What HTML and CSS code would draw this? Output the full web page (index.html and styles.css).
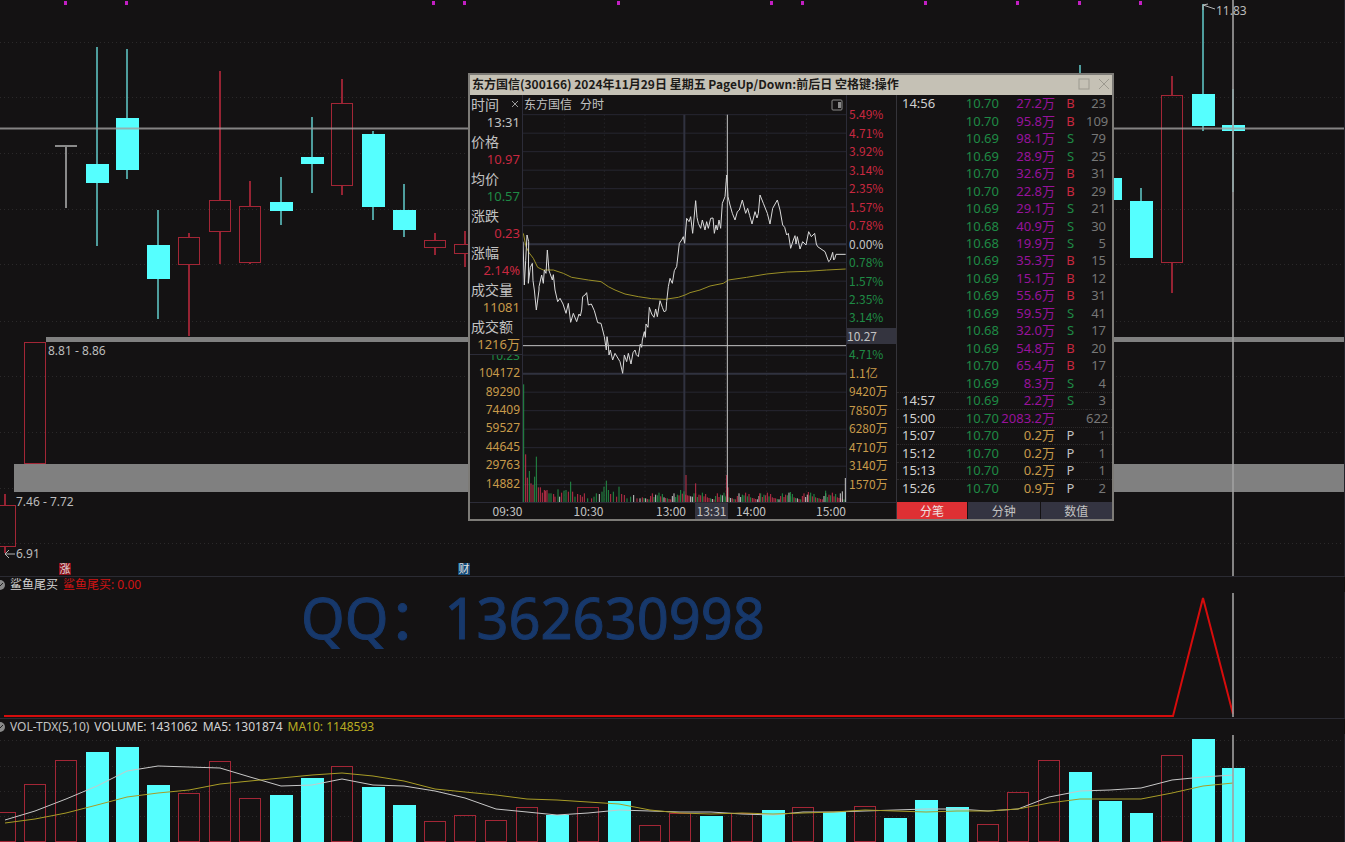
FILE: index.html
```html
<!DOCTYPE html>
<html lang="zh-CN">
<head>
<meta charset="utf-8">
<title>东方国信(300166)</title>
<link rel="stylesheet" href="styles.css">
</head>
<body>
<main class="workspace">
  <section class="pane" aria-label="K线">
    <svg class="chart" viewBox="0 0 1345 576">
      <g class="grid">
        <path d="M0 42.500H1343M0 97.500H1343M0 153.500H1343M0 209.500H1343M0 264.500H1343M0 321.500H1343M0 376.500H1343M0 432.500H1343M0 488.500H1343M0 543.500H1343"/>
      </g>
      <path class="edge" d="M1344.500 0V576"/>
      <g class="gap-band">
        <rect x="46" y="337" width="1298" height="5"/>
        <rect x="14" y="464" width="1330" height="28"/>
      </g>
      <g id="markers" class="marker"></g>
      <g id="candles"></g>
      <path class="cross" d="M0 128.500H1344M1233 0V576"/>
      <path class="pointer" d="M1203 5l12 4M1203 10V5l5-1M5 554H15M9 550l-4 4 4 4"/>
      <g class="note">
        <text x="1216" y="15">11.83</text>
        <text x="48" y="355">8.81 - 8.86</text>
        <text x="16" y="506">7.46 - 7.72</text>
        <text x="16" y="558">6.91</text>
      </g>
      <rect class="badge-rise" x="59" y="563" width="12" height="12"/>
      <rect class="badge-report" x="458" y="563" width="12" height="12"/>
      <text class="badge-text" x="65" y="573">涨</text>
      <text class="badge-text" x="464" y="573">财</text>
    </svg>
  </section>

  <section class="pane" aria-label="鲨鱼尾买">
    <header class="pane-head">
      <svg class="toggle" viewBox="0 0 10 10"><circle cx="5" cy="5" r="5"/><path d="M2 5l2 2 4-4"/></svg>
      <span class="c-bright">鲨鱼尾买</span><span class="c-signal">鲨鱼尾买: 0.00</span>
    </header>
    <svg class="chart" viewBox="0 0 1345 126">
      <path class="grid" d="M0 65.500H1343"/>
      <path class="edge" d="M1344.500 0V126"/>
      <path class="signal" d="M4 124H1173L1203 6L1233 122"/>
      <path class="cross" d="M1233 1V125"/>
      <text class="watermark" x="301" y="47">QQ：1362630998</text>
    </svg>
  </section>

  <section class="pane" aria-label="成交量">
    <header class="pane-head">
      <svg class="toggle" viewBox="0 0 10 10"><circle cx="5" cy="5" r="5"/><path d="M2 5l2 2 4-4"/></svg>
      <span>VOL-TDX(5,10)</span><span class="c-bright">VOLUME: 1431062</span><span class="c-bright">MA5: 1301874</span><span class="c-ma">MA10: 1148593</span>
    </header>
    <svg class="chart" viewBox="0 -1 1345 108">
      <path class="grid" d="M0 5.500H1343M0 31.500H1343M0 56.500H1343M0 81.500H1343"/>
      <path class="edge" d="M1344.500 -1V107"/>
      <g id="volumes"></g>
      <polyline id="ma5" class="ma5"/>
      <polyline id="ma10" class="ma10"/>
      <path class="cross" d="M1233 0V107"/>
    </svg>
  </section>

  <section class="window" aria-label="分时">
    <header class="title-bar">
      <h1>东方国信(300166) 2024年11月29日 星期五 PageUp/Down:前后日 空格键:操作</h1>
      <button class="win-btn" aria-label="最大化"><svg viewBox="0 0 12 12"><rect x="1" y="1" width="10" height="10"/></svg></button>
      <button class="win-btn" aria-label="关闭"><svg viewBox="0 0 12 12"><path d="M1 1l10 10M11 1L1 11"/></svg></button>
    </header>
    <div class="window-body">
      <div class="intraday">
        <div class="left-col">
          <dl class="info">
            <dt>时间<button class="info-close" aria-label="关闭信息"><svg viewBox="0 0 6 6"><path d="M0 0l6 6M6 0L0 6"/></svg></button></dt><dd>13:31</dd>
            <dt>价格</dt><dd class="up">10.97</dd>
            <dt>均价</dt><dd class="down">10.57</dd>
            <dt>涨跌</dt><dd class="up">0.23</dd>
            <dt>涨幅</dt><dd class="up">2.14%</dd>
            <dt>成交量</dt><dd class="amount">11081</dd>
            <dt>成交额</dt><dd class="amount">1216万</dd>
          </dl>
          <div class="clipped down"><span>10.23</span></div>
          <div class="axis axis-left amount">
            <span>104172</span><span>89290</span><span>74409</span><span>59527</span><span>44645</span><span>29763</span><span>14882</span>
          </div>
        </div>
        <div class="plot-col">
          <div class="plot-head"><span>东方国信</span><span>分时</span>
            <button class="side-btn" aria-label="侧栏"><svg viewBox="0 0 12 12"><rect x="1" y="1" width="10" height="10" rx="1"/><path class="fill" d="M7 3h3v6H7z"/></svg></button>
          </div>
          <svg class="plot" viewBox="0 0 969 1164" preserveAspectRatio="none">
            <g id="plot-grid" class="plot-grid"></g>
            <path class="plot-dots" d="M124 2V1164M244 2V1164M366 2V1164M607 2V1164M731 2V1164M850 2V1164"/>
            <path class="plot-axis" d="M484 2V1164M0 391H969M0 779H969"/>
            <g id="ticks-volume"></g>
            <polyline class="avg" points="1,358 9,398 18,416 31,433 44,460 61,468 91,468 121,478 146,490 196,498 234,503 256,518 276,528 306,540 346,548 386,554 426,556 466,550 486,543 501,536 531,528 561,516 601,508 616,498 671,490 731,480 791,474 851,472 911,468 968,465"/>
            <polyline class="price" points="0,383 4,513 8,440 12,363 17,383 16,508 22,460 28,448 30,500 34,528 40,588 48,528 48,518 56,483 61,508 64,468 69,478 73,408 78,470 81,478 88,498 91,482 96,528 104,563 111,553 120,570 129,598 136,568 143,625 151,598 161,623 168,600 172,606 176,588 179,548 186,543 191,536 196,573 205,570 214,590 224,626 234,628 244,668 250,708 252,668 256,695 258,723 262,708 269,738 276,718 291,743 299,778 304,723 311,743 316,718 324,750 330,716 336,708 340,722 346,728 352,690 356,700 358,678 364,653 367,670 369,630 375,640 379,580 386,600 393,610 398,585 403,608 411,560 418,580 423,593 429,590 431,563 436,518 441,493 448,508 454,470 461,458 469,388 476,378 481,368 485,388 491,313 498,323 503,308 509,358 518,260 522,310 526,328 533,343 538,318 546,348 551,323 556,343 563,313 570,312 574,358 579,333 583,348 588,318 593,343 598,268 606,248 611,183 613,208 615,248 621,273 628,298 636,318 643,293 649,288 658,258 668,298 674,283 680,305 687,330 696,293 702,312 706,298 711,243 721,268 733,298 741,330 749,283 763,258 771,288 779,333 785,340 791,363 796,358 803,403 811,378 816,365 819,390 823,368 831,405 839,383 849,393 857,353 865,368 875,358 880,390 884,398 906,413 917,443 922,438 929,415 932,438 935,435 939,421 968,421"/>
            <path class="plot-cross" d="M613 2V1164M0 695H969"/>
          </svg>
        </div>
        <div class="right-col">
          <div class="axis axis-right">
            <span class="up">5.49%</span><span class="up">4.71%</span><span class="up">3.92%</span><span class="up">3.14%</span><span class="up">2.35%</span><span class="up">1.57%</span><span class="up">0.78%</span><span>0.00%</span><span class="down">0.78%</span><span class="down">1.57%</span><span class="down">2.35%</span><span class="down">3.14%</span><span class="current">10.27</span><span class="down">4.71%</span><span class="amount">1.1亿</span><span class="amount">9420万</span><span class="amount">7850万</span><span class="amount">6280万</span><span class="amount">4710万</span><span class="amount">3140万</span><span class="amount">1570万</span>
          </div>
        </div>
        <div class="time-axis">
          <span>09:30</span><span>10:30</span><span class="end">13:00</span><span class="current">13:31</span><span>14:00</span><span class="end last">15:00</span>
        </div>
      </div>
      <div class="trades">
        <table>
          <colgroup><col class="w-time"><col class="w-price"><col class="w-vol"><col class="w-side"><col></colgroup>
          <tbody id="trades"></tbody>
        </table>
        <nav class="tabs"><button class="active">分笔</button><button>分钟</button><button>数值</button></nav>
      </div>
    </div>
  </section>
</main>
<script src="app.js"></script>
</body>
</html>
```
FILE: styles.css
```css
* { box-sizing: border-box; }
body {
  margin: 0;
  background: #141213;
  color: #c2c2c2;
  font: 12px/16px "Noto Sans CJK SC", "Noto Sans", sans-serif;
}
button { border: 0; padding: 0; background: none; color: inherit; font: inherit; }
svg { display: block; fill: none; }
.workspace { position: relative; overflow: hidden; }
.pane { border-bottom: 1px solid #2b2b33; }
.pane:nth-of-type(3) { border-bottom: 0; }
.chart { width: 100%; }
.edge { stroke: #24242c; }
.pane-head, .note, .axis-left, .clipped, .info dd, .trades table {
  font-family: "Noto Sans", "Noto Sans CJK SC", sans-serif;
}
.pane-head { display: flex; gap: 5px; height: 15px; line-height: 15px; }
.toggle { width: 10px; height: 10px; margin: 3px 0 0 -5px; }
.toggle circle { fill: #8a8a8a; }
.toggle path { stroke: #222; }
.c-signal { color: #d01414; }
.c-bright { color: #d4d4d4; }
.c-ma { color: #b9ac22; }

.grid { stroke: #2b292a; stroke-dasharray: 1 3; }
.gap-band { fill: #808080; }
.marker { fill: #c31fc3; }
.cross { stroke: #a0a0a0; stroke-width: 2; opacity: .8; }
.pointer { stroke: #b5b5b5; }
.note { fill: #bcbcbc; }
.badge-rise { fill: #8e1018; }
.badge-report { fill: #134a78; }
.badge-text { fill: #e0e0e0; font-size: 11px; text-anchor: middle; }
.signal { stroke: #d60c0c; stroke-width: 2; }
.watermark {
  fill: #17386b;
  stroke: #17386b;
  stroke-width: 1;
  font: 56px "Noto Sans", "Noto Sans CJK SC", sans-serif;
}
.rise { stroke: #a32636; shape-rendering: crispEdges; }
.fall { fill: #55ffff; }
.fall-wick { stroke: #4e9d9d; stroke-width: 2; shape-rendering: crispEdges; }
.rise-wick { stroke: #962333; stroke-width: 2; shape-rendering: crispEdges; }
.flat { stroke: #8a8a8a; stroke-width: 2; shape-rendering: crispEdges; }
.ma5 { stroke: #c8c8c8; }
.ma10 { stroke: #a89c26; }

.window {
  position: absolute;
  top: 73px;
  left: 468px;
  width: 646px;
  border: 2px solid #7d7b77;
  background: #141213;
}
.title-bar { display: flex; align-items: center; gap: 8px; height: 20px; padding: 0 2px 2px; background: #c5c1b5; color: #1c1a18; }
.title-bar h1 { flex: 1; margin: 0; font-size: 12px; line-height: 18px; white-space: nowrap; }
.win-btn svg { width: 12px; height: 12px; stroke: #9c998f; }
.window-body { display: flex; height: 424px; }
.intraday { flex: 1; display: grid; grid-template-columns: 53px 1fr 50px; grid-template-rows: 1fr 17px; border-right: 1px solid #35343a; }
.left-col { border-right: 1px solid #2c2c38; }
.info { margin: 0; height: 260px; display: grid; grid-auto-rows: 1fr; font-size: 13px; line-height: 17px; border-bottom: 1px solid #2c2c38; }
.info dt { display: flex; align-items: center; justify-content: space-between; font-size: 14px; padding: 0 4px 0 1px; }
.info dd { margin: 0; padding-right: 2px; text-align: right; white-space: nowrap; }
.info-close svg { width: 6px; height: 6px; stroke: #999; }
.up { color: #c82840; }
.down { color: #1f8a45; }
.amount { color: #c79a4a; }
.clipped { display: flex; align-items: flex-end; justify-content: flex-end; height: 9px; overflow: hidden; padding-right: 2px; }
.axis { display: grid; grid-auto-rows: 1fr; align-items: center; }
.axis-left { height: 129px; text-align: right; padding-right: 2px; }
.plot-col { display: flex; flex-direction: column; }
.plot-head { display: flex; gap: 8px; height: 19px; padding: 0 3px 0 1px; line-height: 18px; }
.side-btn { margin-left: auto; }
.side-btn svg { width: 12px; height: 12px; stroke: #8a8a8a; }
.side-btn .fill { fill: #8a8a8a; stroke: none; }
.plot { width: 100%; height: 388px; }
.plot * { vector-effect: non-scaling-stroke; }
.plot-grid { stroke: #272731; }
.plot-dots { stroke: #2c2c33; stroke-dasharray: 1 3; }
.plot-axis { stroke: #30323f; stroke-width: 2; }
.avg { stroke: #9a8f26; }
.price { stroke: #dadada; }
.plot-cross { stroke: #c4c4c4; }
.right-col { border-left: 1px solid #2c2c38; padding-top: 10px; }
.axis-right { height: 388px; }
.axis-right span { padding-left: 2px; }
.current { background: #34343f; }
.axis-right .current { padding-left: 0; }
.time-axis { grid-column: 1 / -1; display: grid; grid-template-columns: 75px 87px 63px 33px 46px 72px; border-top: 1px solid #2c2c38; line-height: 15px; text-align: center; }
.end { text-align: right; padding-right: 9px; }
.last { padding-right: 0; }

.trades { width: 215px; display: flex; flex-direction: column; justify-content: space-between; }
.trades table { height: 402px; width: 100%; table-layout: fixed; border-spacing: 0; font-size: 13px; line-height: 14px; }
.trades td { padding: 0 0 2px; border-top: 1px dotted transparent; text-align: right; white-space: nowrap; }
.trades td:first-child { text-align: left; padding-left: 5px; color: #d0d0d0; }
.trades td:nth-child(4) { text-align: center; }
.trades td:last-child { padding-right: 6px; color: #777; }
.trades .sep td { border-top-color: #2b292a; }
.w-time { width: 60px; }
.w-price { width: 42px; }
.w-vol { width: 56px; }
.w-side { width: 31px; }
.trades .heavy { color: #98129c; }
.tabs { display: grid; grid-template-columns: 70px 1fr 1fr; gap: 1px; height: 17px; }
.tabs button { background: #343441; line-height: 17px; }
.tabs .active { background: #de3034; color: #f0e0e0; }
```
FILE: app.js
```js
const NS = "http://www.w3.org/2000/svg";
const byId = (id) => document.getElementById(id);
const barX = (i) => Math.round(4.5 + i * 30.72);

function add(parent, tag, cls, attrs) {
  const el = document.createElementNS(NS, tag);
  if (cls) el.setAttribute("class", cls);
  for (const key in attrs) el.setAttribute(key, attrs[key]);
  parent.appendChild(el);
}

function bar(parent, x, top, bottom, kind) {
  if (kind === "r") {
    add(parent, "rect", "rise", { x: x - 10.5, y: top + 0.5, width: 21, height: bottom - top - 1 });
  } else {
    add(parent, "rect", "fall", { x: x - 11, y: top, width: 23, height: bottom - top });
  }
}

// index, kind, high, body top, body bottom, low
const candles = [
  [0, "r", 494, 505, 547, 553], [1, "r", 342, 342, 464, 464],
  [3, "c", 47, 164, 183, 246], [4, "c", 49, 118, 170, 179], [5, "c", 210, 245, 279, 319],
  [6, "r", 233, 237, 265, 336], [7, "r", 71, 200, 232, 264], [8, "r", 181, 206, 263, 264],
  [9, "c", 177, 202, 211, 225], [10, "c", 117, 157, 164, 193], [11, "r", 79, 103, 186, 195],
  [12, "c", 131, 134, 207, 220], [13, "c", 184, 210, 230, 237], [14, "r", 233, 240, 248, 255],
  [15, "r", 231, 244, 254, 267], [35, "c", 65, 100, 110, 120], [36, "c", 178, 178, 200, 200],
  [37, "c", 188, 201, 258, 258], [38, "r", 76, 95, 263, 293], [39, "c", 4, 94, 126, 131],
  [40, "c", 89, 125, 131, 192]
];
const candleLayer = byId("candles");
for (const [i, kind, high, top, bottom, low] of candles) {
  const x = barX(i);
  const wick = kind === "r" ? "rise-wick" : "fall-wick";
  add(candleLayer, "path", wick, { d: `M${x} ${high}V${top}M${x} ${bottom}V${low}` });
  bar(candleLayer, x, top, bottom, kind);
}
add(candleLayer, "path", "flat", { d: "M55 146H77M66 146V208" });

for (const x of [65, 126, 433, 464, 618, 771, 802, 925, 1017, 1079, 1140]) {
  add(byId("markers"), "rect", "", { x: x - 1, y: 1, width: 3, height: 4 });
}

const volumes = "77r 49r 25r 17c 12c 50c 58r 26r 63r 60c 43c 31r 52c 70c 86r 80r 85r 72r 80c 72r 66c 90r 78r 81c 78r 75c 72r 77c 71r 83c 65c 72c 89r 57r 25r 37c 66c 78c 20r 4c 33c".split(" ");
volumes.forEach((v, i) => bar(byId("volumes"), barX(i), parseInt(v, 10), 107, v.slice(-1)));

const line = (values) => values.map((v, i) => `${barX(i)},${v}`).join(" ");
byId("ma5").setAttribute("points", line([85, 76, 64, 51, 36, 31, 32, 33, 42, 51, 50, 44, 50, 51, 56, 63, 74, 77, 80, 78, 75, 76, 77, 77, 79, 80, 77, 77, 76, 75, 74, 74, 76, 74, 62, 56, 55, 53, 45, 42, 40]));
byId("ma10").setAttribute("points", line([88, 84, 78, 70, 62, 58, 55, 49, 46, 43, 40, 38, 41, 46, 54, 57, 60, 64, 65, 67, 69, 75, 78, 79, 78, 79, 78, 77, 75, 76, 77, 76, 76, 74, 68, 64, 64, 64, 58, 51, 48]));

for (let y = 2; y < 1164; y += 55.5) {
  add(byId("plot-grid"), "path", "", { d: `M0 ${y}H969` });
}

// Intraday volume: measured heights first, then a light repeating tail.
const palette = { r: "#c0304a", g: "#239048", w: "#c8c8c8" };
const volumeLayer = byId("ticks-volume");
const tick = (x, h, c) => add(volumeLayer, "path", "", { d: `M${x} 1164V${1164 - h}`, stroke: palette[c] });
const opening = "2:353g 8:143r 13:73r 19:93g 24:56r 30:51r 35:76g 40:136g 46:44r 52:44r 58:28r 64:36r 68:34r 72:36r 78:26g 84:26g 92:24r 96:16r 105:38g 110:16w 116:28r 123:34g 129:36g 136:31r 143:61g 149:31r 156:16g 164:24r 172:21r 178:16r 184:26r 194:11g 206:11r 213:16g 220:26g 229:24w 237:31g 243:46g 250:64g 256:36g 263:24r 271:31g 281:16r 288:46g 296:24r 304:21r 312:11g 323:16g 332:21w 342:11r 351:11w";
for (const entry of opening.split(" ")) {
  const [x, v] = entry.split(":");
  tick(+x, parseInt(v, 10), v.slice(-1));
}
const heights = [14, 22, 9, 17, 26, 12, 20, 8, 24, 15, 11, 28, 18];
const tones = "rgrwgrrgwrrgrgw";
for (let n = 0, x = 358; x < 966; x += 5, n++) {
  tick(x, heights[(n * 5) % 13] + (x > 470 && x < 515 ? 8 : 0), tones[(n * 4 + (n >> 3)) % 15]);
}
for (const [x, h, c] of [[489, 81, "r"], [518, 56, "r"], [611, 81, "r"], [615, 44, "r"], [710, 26, "r"], [802, 30, "g"], [856, 30, "r"], [908, 34, "g"], [952, 26, "w"], [958, 32, "w"], [967, 72, "w"]]) {
  tick(x, h, c);
}

const trades = `|10.70|27.2|B|23
|10.70|95.8|B|109
|10.69|98.1|S|79
|10.69|28.9|S|25
|10.70|32.6|B|31
|10.70|22.8|B|29
|10.69|29.1|S|21
|10.68|40.9|S|30
|10.68|19.9|S|5
|10.69|35.3|B|15
|10.69|15.1|B|12
|10.69|55.6|B|31
|10.69|59.5|S|41
|10.68|32.0|S|17
|10.69|54.8|B|20
|10.70|65.4|B|17
|10.69|8.3|S|4
14:57|10.69|2.2|S|3
15:00|10.70|2083.2||622
15:07|10.70|0.2|P|1
15:12|10.70|0.2|P|1
15:13|10.70|0.2|P|1
15:26|10.70|0.9|P|2`.split("\n");
const sideClass = { B: "up", S: "down", P: "", "": "" };
trades.forEach((record, n) => {
  const [time, price, volume, side, count] = record.split("|");
  const row = byId("trades").insertRow();
  if (time) row.className = "sep";
  const cells = [[n === 0 ? "14:56" : time, ""], [price, "down"], [volume + "万", side === "P" ? "amount" : "heavy"], [side, sideClass[side]], [count, ""]];
  for (const [text, cls] of cells) {
    const cell = row.insertCell();
    cell.textContent = text;
    if (cls) cell.className = cls;
  }
});
```
